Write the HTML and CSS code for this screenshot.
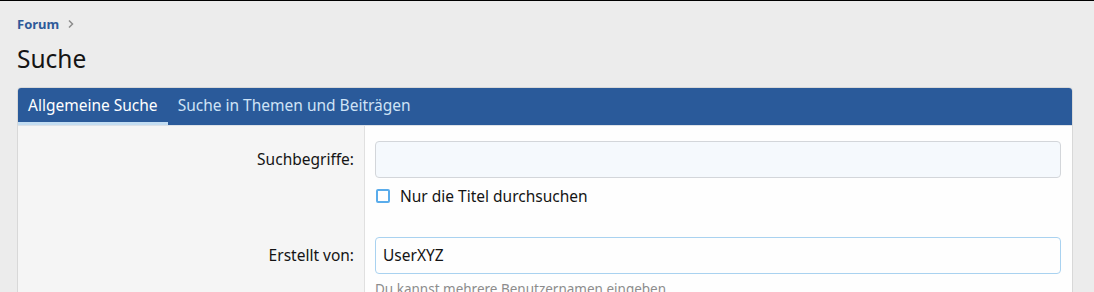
FILE: index.html
```html
<!DOCTYPE html>
<html lang="de">
<head>
<meta charset="utf-8">
<title>Suche</title>
<link rel="stylesheet" href="styles.css">
</head>
<body>
<div class="page">
  <nav class="crumbs">
    <a class="crumb" href="#">Forum</a>
    <svg class="chev" width="8" height="10" viewBox="0 0 8 10"><path d="M2 1.5 L5.5 5 L2 8.5" fill="none" stroke="#8c8c8c" stroke-width="1.5"/></svg>
  </nav>
  <h1 class="title">Suche</h1>
  <div class="block">
    <div class="tabs">
      <span class="tab active">Allgemeine Suche</span>
      <span class="tab">Suche in Themen und Beiträgen</span>
    </div>
    <div class="form">
      <div class="row">
        <div class="label">Suchbegriffe:</div>
        <div class="field">
          <div class="input"></div>
          <label class="check"><span class="box"></span>Nur die Titel durchsuchen</label>
        </div>
      </div>
      <div class="row row2">
        <div class="label">Erstellt von:</div>
        <div class="field">
          <div class="input focus">UserXYZ</div>
          <div class="hint">Du kannst mehrere Benutzernamen eingeben.</div>
        </div>
      </div>
    </div>
  </div>
</div>
</body>
</html>
```
FILE: styles.css
```css
html, body { margin: 0; padding: 0; }
body {
  background: #ececec;
  border-top: 1px solid #000;
  font-family: "Noto Sans", "Open Sans", sans-serif;
  color: #141414;
  height: 291px;
  overflow: hidden;
}
.page { padding: 0 21px 0 17px; }
.crumbs {
  display: flex;
  align-items: center;
  gap: 8px;
  height: 18px;
  margin-top: 14px;
}
.crumb {
  color: #2f5a99;
  font-weight: bold;
  font-size: 13px;
  text-decoration: none;
}
.title {
  margin: 9px 0 0;
  font-weight: normal;
  font-size: 24.5px;
  line-height: 34px;
  height: 34px;
  color: #141414;
}
.block {
  margin-top: 11px;
  border: 1px solid #d8d8d8;
  border-radius: 4px;
  background: #fefefe;
  overflow: hidden;
}
.tabs {
  display: flex;
  background: #2a5a9a;
  height: 37px;
  border-bottom: 1px solid #dde2e8;
}
.tab {
  padding: 0 10px;
  font-size: 15.5px;
  line-height: 34px;
  color: #cfe3f6;
  border-bottom: 3px solid transparent;
}
.tab.active {
  color: #fff;
  border-bottom-color: #c3ddf2;
}
.row { display: flex; }
.label {
  width: 336px;
  padding-right: 10px;
  flex: none;
  background: #f5f5f5;
  border-right: 1px solid #e0e0e0;
  text-align: right;
  font-size: 15.5px;
  line-height: 37px;
  padding-top: 15px;
}
.row2 .label { padding-top: 30px; }
.field {
  flex: 1;
  padding: 15px 11px 0 10px;
}
.row2 .field { padding-top: 30px; }
.input {
  height: 35px;
  border: 1px solid #d3d6da;
  border-radius: 4px;
  background: #f5f9fd;
  font-size: 15.5px;
  line-height: 35px;
  padding: 0 7px;
}
.input.focus {
  background: #fefefe;
  border-color: #a9d2f0;
}
.check {
  display: flex;
  align-items: center;
  gap: 10px;
  height: 22px;
  margin-top: 7px;
  font-size: 15.5px;
}
.box {
  width: 10px;
  height: 10px;
  border: 2px solid #5aaceb;
  border-radius: 2px;
  margin-left: 1px;
  background: #fff;
}
.hint {
  margin-top: 6px;
  font-size: 13.5px;
  color: #8c8c8c;
}
```
